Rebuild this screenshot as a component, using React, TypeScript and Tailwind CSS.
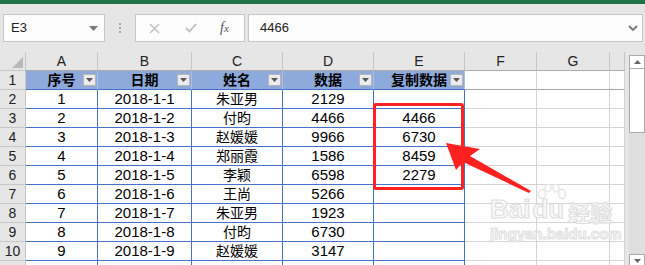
import React from 'react';

const rows: string[][] = [
  ['1', '2018-1-1', '朱亚男', '2129', ''],
  ['2', '2018-1-2', '付昀', '4466', '4466'],
  ['3', '2018-1-3', '赵媛媛', '9966', '6730'],
  ['4', '2018-1-4', '郑丽霞', '1586', '8459'],
  ['5', '2018-1-5', '李颖', '6598', '2279'],
  ['6', '2018-1-6', '王尚', '5266', ''],
  ['7', '2018-1-7', '朱亚男', '1923', ''],
  ['8', '2018-1-8', '付昀', '6730', ''],
  ['9', '2018-1-9', '赵媛媛', '3147', ''],
];

const headers = ['序号', '日期', '姓名', '数据', '复制数据'];
const letters = ['A', 'B', 'C', 'D', 'E', 'F', 'G', ''];

function FilterBtn() {
  return (
    <div className="absolute right-[1px] top-[3px] w-[13px] h-[12px] bg-[#ececec] border border-[#b5b5b5] flex items-center justify-center">
      <svg width="7" height="4" viewBox="0 0 7 4">
        <path d="M0 0 L7 0 L3.5 4 Z" fill="#555" />
      </svg>
    </div>
  );
}

export default function App() {
  return (
    <div className="relative w-[645px] h-[265px] overflow-hidden bg-[#e6e6e6] font-['Liberation_Sans','Noto_Sans_CJK_SC',sans-serif] text-black">
      <div className="h-[4px] bg-[#217346]" />
      {/* toolbar */}
      <div className="flex items-start mt-[10px] h-[28px]">
        <div className="ml-[3px] w-[102px] h-[28px] bg-[#fdfdfd] border border-[#c6c6c6] flex items-center justify-between pl-[7px] pr-[6px]">
          <span className="text-[13px] text-[#222]">E3</span>
          <svg width="9" height="5" viewBox="0 0 9 5">
            <path d="M0 0 L9 0 L4.5 5 Z" fill="#777" />
          </svg>
        </div>
        <div className="ml-[14px] h-[28px] flex flex-col justify-center gap-[2px]">
          <div className="w-[2px] h-[2px] bg-[#a8a8a8]" />
          <div className="w-[2px] h-[2px] bg-[#a8a8a8]" />
          <div className="w-[2px] h-[2px] bg-[#a8a8a8]" />
        </div>
        <div className="ml-[14px] w-[110px] h-[28px] bg-[#fdfdfd] border border-[#c6c6c6] flex items-center">
          <svg className="ml-[13px]" width="11" height="11" viewBox="0 0 11 11">
            <path d="M1 1 L10 10 M10 1 L1 10" stroke="#bdbdbd" strokeWidth="1.3" fill="none" />
          </svg>
          <svg className="ml-[25px]" width="12" height="10" viewBox="0 0 12 10">
            <path d="M1 5 L4.5 8.5 L11 1" stroke="#bdbdbd" strokeWidth="1.8" fill="none" />
          </svg>
          <span className="ml-[23px] font-['Liberation_Serif',serif] italic text-[14px] text-[#555] leading-none">
            f<span className="text-[11px]">x</span>
          </span>
        </div>
        <div className="ml-[3px] w-[395px] h-[28px] bg-[#fdfdfd] border border-[#c6c6c6] flex items-center justify-between pl-[11px] pr-[4px]">
          <span className="text-[13px] text-[#222]">4466</span>
          <svg width="10" height="6" viewBox="0 0 10 6">
            <path d="M1 1 L5 5 L9 1" stroke="#777" strokeWidth="1.8" fill="none" />
          </svg>
        </div>
      </div>

      {/* sheet */}
      <div className="flex mt-[10px]">
        <div className="grid grid-cols-[26px_72px_94px_91px_91px_91px_72px_73px_15px] auto-rows-[19px] w-[625px]">
          {/* column header row */}
          <div className="relative bg-[#e6e6e6] border-r border-b border-[#c6c6c6]">
            <svg className="absolute right-[2px] bottom-[2px]" width="11" height="11" viewBox="0 0 11 11">
              <path d="M11 0 L11 11 L0 11 Z" fill="#b9b9b9" />
            </svg>
          </div>
          {letters.map((l, i) => (
            <div
              key={'h' + i}
              className="bg-[#e6e6e6] border-r border-b border-r-[#c6c6c6] border-b-[#ababab] flex items-center justify-center text-[14px] text-[#222]"
            >
              {l}
            </div>
          ))}

          {/* row 1: table headers */}
          <div className="bg-[#e6e6e6] border-r border-b border-[#c6c6c6] flex items-center justify-center text-[14px] text-[#222]">
            1
          </div>
          {headers.map((h, i) => (
            <div
              key={'th' + i}
              className="relative bg-[#8ea9db] border-r border-b border-r-[#a9bfe6] border-b-[#4472c4] flex items-center justify-center text-[14px] font-bold text-black"
            >
              <span className="relative z-0">{h}</span>
              <FilterBtn />
            </div>
          ))}
          <div className="bg-white border-r border-b border-r-[#d4d4d4] border-b-[#a6a6a6]" />
          <div className="bg-white border-r border-b border-r-[#d4d4d4] border-b-[#a6a6a6]" />
          <div className="bg-white border-r border-b border-r-[#d4d4d4] border-b-[#a6a6a6]" />

          {rows.map((r, ri) => (
            <React.Fragment key={'r' + ri}>
              <div className="bg-[#e6e6e6] border-r border-b border-[#c6c6c6] flex items-center justify-center text-[14px] text-[#222]">
                {ri + 2}
              </div>
              {r.map((c, ci) => (
                <div
                  key={'c' + ci}
                  className={
                    'bg-white border-r border-b border-[#4472c4] flex items-center justify-center ' +
                    (ci === 2 ? 'text-[14px]' : 'text-[15px]')
                  }
                >
                  {c}
                </div>
              ))}
              <div className="bg-white border-r border-b border-[#d4d4d4]" />
              <div className="bg-white border-r border-b border-[#d4d4d4]" />
              <div className="bg-white border-r border-b border-[#d4d4d4]" />
            </React.Fragment>
          ))}

          {/* row 11 partial (cut off at the bottom edge) */}
          <div className="bg-[#e6e6e6] border-r border-b border-[#c6c6c6]" />
          {[0, 1, 2, 3, 4].map((i) => (
            <div key={'x' + i} className="bg-white border-r border-b border-r-[#4472c4] border-b-[#d4d4d4]" />
          ))}
          <div className="bg-white border-r border-b border-[#d4d4d4]" />
          <div className="bg-white border-r border-b border-[#d4d4d4]" />
          <div className="bg-white border-r border-b border-[#d4d4d4]" />
        </div>

        {/* vertical scrollbar */}
        <div className="ml-[4px] mt-[3px] w-[16px] h-[220px] bg-[#dedede] flex flex-col">
          <div className="h-[14px] bg-white border border-[#ababab] flex items-center justify-center">
            <svg width="7" height="4" viewBox="0 0 7 4">
              <path d="M0 4 L7 4 L3.5 0 Z" fill="#666" />
            </svg>
          </div>
          <div className="h-[64px] bg-white border border-[#ababab] border-t-0" />
          <div className="flex-1" />
          <div className="h-[14px] bg-white border border-[#ababab] flex items-center justify-center mb-[7px]">
            <svg width="7" height="4" viewBox="0 0 7 4">
              <path d="M0 0 L7 0 L3.5 4 Z" fill="#666" />
            </svg>
          </div>
        </div>
      </div>

      {/* watermark */}
      <div className="absolute left-[490px] top-[184px] pointer-events-none select-none">
        <svg className="absolute left-[44px] top-[0px]" width="34" height="30" viewBox="0 0 34 30">
          <g fill="none" stroke="#e2e2e2" strokeWidth="1.3">
            <ellipse cx="8" cy="10" rx="3.5" ry="4.5" />
            <ellipse cx="14" cy="4" rx="3.2" ry="3.8" />
            <ellipse cx="22" cy="4" rx="3.2" ry="3.8" />
            <ellipse cx="28" cy="10" rx="3.5" ry="4.5" />
          </g>
        </svg>
        <div className="relative flex items-end mt-[12px] text-[26px] font-bold leading-none text-[#f8f8f8] [-webkit-text-stroke:1px_#dddddd]">
          <span>Bai</span>
          <span className="ml-[2px]">du</span>
          <span className="ml-[4px] text-[22px] font-['Noto_Sans_CJK_SC',sans-serif]">经验</span>
        </div>
        <div className="mt-[4px] text-[15px] font-bold leading-none text-[#f8f8f8] [-webkit-text-stroke:1px_#e0e0e0]">
          jingyan.baidu.com
        </div>
      </div>

      {/* red selection rectangle */}
      <div className="absolute left-[373px] top-[103px] w-[91px] h-[87px] border-[3px] border-[#ff2222] rounded-[3px] pointer-events-none" />

      {/* red arrow */}
      <svg className="absolute left-0 top-0 pointer-events-none" width="645" height="265" viewBox="0 0 645 265">
        <path d="M446 143 L480 149 L470 156 L531 191 L529 193 L463 162 L456 170 Z" fill="#ff2020" />
      </svg>
    </div>
  );
}
